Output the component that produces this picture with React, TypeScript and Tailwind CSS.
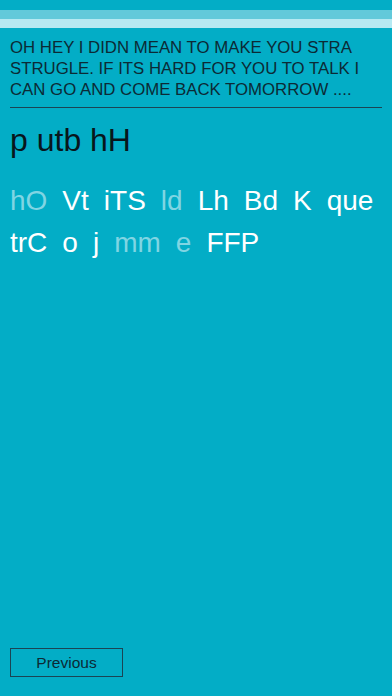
const words: { text: string; dim?: boolean }[] = [
  { text: 'hO', dim: true },
  { text: 'Vt' },
  { text: 'iTS' },
  { text: 'ld', dim: true },
  { text: 'Lh' },
  { text: 'Bd' },
  { text: 'K' },
  { text: 'que' },
  { text: 'trC' },
  { text: 'o' },
  { text: 'j' },
  { text: 'mm', dim: true },
  { text: 'e', dim: true },
  { text: 'FFP' },
];

export default function App() {
  return (
    <div
      className="flex h-[696px] w-[392px] flex-col bg-[#03adc6]"
      style={{ fontFamily: '"Liberation Sans", Arial, sans-serif' }}
    >
      {/* progress bands */}
      <div className="mt-[10px] h-[9px] bg-[#62c9da]" />
      <div className="h-[9px] bg-[#b6e9f2]" />

      {/* message */}
      <div className="mx-[10px] mt-[9px] border-b border-[#1b4454] pb-[7px]">
        <p className="text-[16.8px] leading-[21px] text-[#0c2a35]">
          OH HEY I DIDN MEAN TO MAKE YOU STRA STRUGLE. IF ITS HARD FOR YOU TO TALK I CAN GO AND COME BACK TOMORROW ....
        </p>
      </div>

      <h1 className="mx-[10px] mt-[14px] text-[32px] leading-[36px] text-[#08161c]">p utb hH</h1>

      <div className="mx-[10px] mt-[22px] flex flex-wrap gap-x-[15px] text-[28px] leading-[42px]">
        {words.map((w, i) => (
          <span key={i} className={w.dim ? 'text-[#80d5e3]' : 'text-white'}>
            {w.text}
          </span>
        ))}
      </div>

      <div className="mt-auto px-[10px] pb-[19px]">
        <button className="flex h-[29px] w-[113px] items-center justify-center border border-[#1b4454] text-[15.5px] text-[#0c2a35]">
          Previous
        </button>
      </div>
    </div>
  );
}
